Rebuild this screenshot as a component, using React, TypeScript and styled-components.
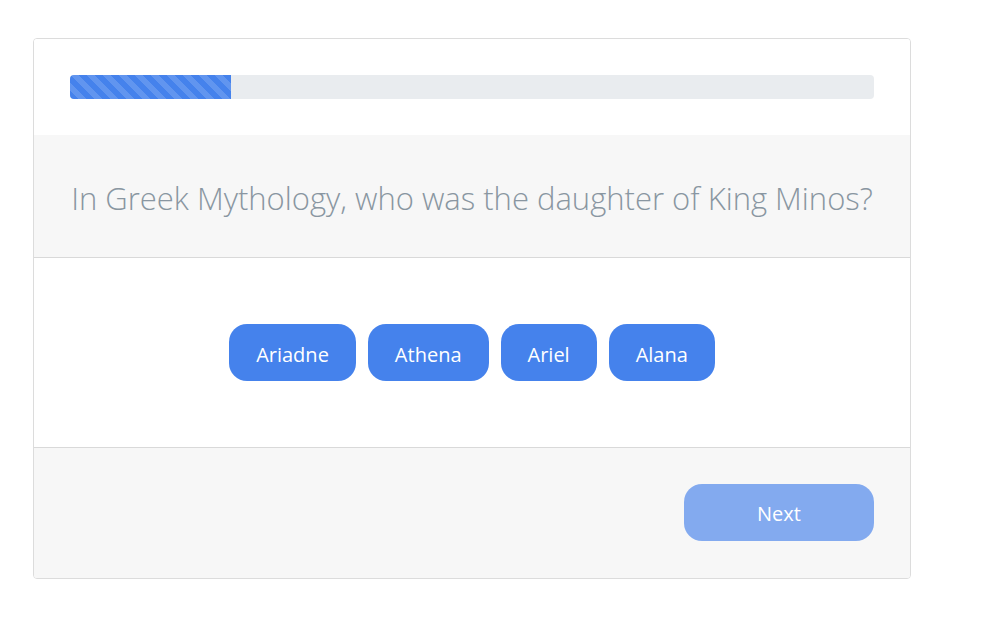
import React from "react";
import styled, { createGlobalStyle } from "styled-components";

const Global = createGlobalStyle`
  html, body { margin: 0; padding: 0; background: #fff; }
  body { font-family: "Open Sans", "Noto Sans", sans-serif; }
  * { box-sizing: border-box; }
`;

const Page = styled.div`
  padding: 38px 0 0 33px;
`;

const Card = styled.div`
  width: 878px;
  border: 1px solid #dcdcdc;
  border-radius: 4px;
  overflow: hidden;
  background: #fff;
`;

const Header = styled.div`
  padding: 36px;
  background: #fff;
`;

const Track = styled.div`
  height: 24px;
  border-radius: 4px;
  background: #e9ecef;
  overflow: hidden;
  display: flex;
`;

const Fill = styled.div`
  height: 100%;
  background-color: #4582ec;
  background-image: linear-gradient(
    45deg,
    rgba(255, 255, 255, 0.15) 25%,
    transparent 25%,
    transparent 50%,
    rgba(255, 255, 255, 0.15) 50%,
    rgba(255, 255, 255, 0.15) 75%,
    transparent 75%,
    transparent
  );
  background-size: 16px 16px;
`;

const QuestionBox = styled.div`
  background: #f7f7f7;
  border-bottom: 1px solid #d9d9d9;
  height: 123px;
  display: flex;
  align-items: center;
  justify-content: center;
  padding: 4px 10px 0;
`;

const Question = styled.h2`
  margin: 0;
  font-family: "Open Sans", sans-serif;
  font-weight: 300;
  font-size: 31px;
  color: #8996a1;
  text-align: center;
  white-space: nowrap;
`;

const Answers = styled.div`
  height: 189px;
  display: flex;
  align-items: center;
  justify-content: center;
  gap: 12px;
  background: #fff;
`;

const AnswerButton = styled.button`
  height: 57px;
  padding: 3px 27px 0;
  border: none;
  border-radius: 18px;
  background: #4582ec;
  color: #fff;
  font-family: "Open Sans", sans-serif;
  font-size: 20px;
  cursor: pointer;
`;

const Footer = styled.div`
  border-top: 1px solid #d9d9d9;
  background: #f7f7f7;
  padding: 36px 36px 37px;
  display: flex;
  justify-content: flex-end;
`;

const NextButton = styled.button`
  width: 190px;
  height: 57px;
  padding-top: 3px;
  border: none;
  border-radius: 18px;
  background: #83aaef;
  color: #fff;
  font-family: "Open Sans", sans-serif;
  font-size: 20px;
`;

const answers = ["Ariadne", "Athena", "Ariel", "Alana"];

export default function App() {
  const progress = 20;
  return (
    <Page>
      <Global />
      <Card>
        <Header>
          <Track>
            <Fill style={{ width: `${progress}%` }} />
          </Track>
        </Header>
        <QuestionBox>
          <Question>In Greek Mythology, who was the daughter of King Minos?</Question>
        </QuestionBox>
        <Answers>
          {answers.map((a) => (
            <AnswerButton key={a}>{a}</AnswerButton>
          ))}
        </Answers>
        <Footer>
          <NextButton disabled>Next</NextButton>
        </Footer>
      </Card>
    </Page>
  );
}
